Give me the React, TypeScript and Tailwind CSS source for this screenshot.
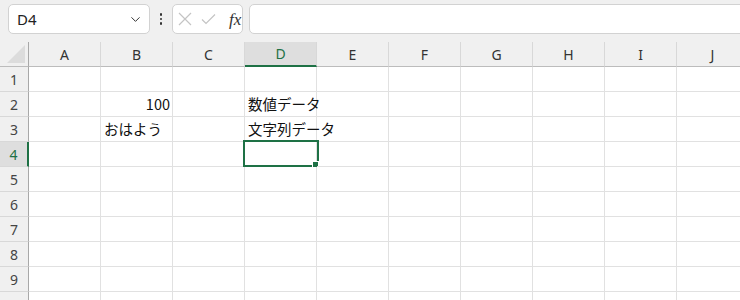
import { ChevronDown } from "lucide-react"

const cols = ["A", "B", "C", "D", "E", "F", "G", "H", "I", "J"]
const rows = [1, 2, 3, 4, 5, 6, 7, 8, 9, 10]

const data: Record<string, { text: string; align?: "right" }> = {
  B2: { text: "100", align: "right" },
  D2: { text: "数値データ" },
  B3: { text: "おはよう" },
  D3: { text: "文字列データ" },
}

const cellFont = { fontFamily: '"Noto Sans CJK JP", "Noto Sans", sans-serif' }

export default function App() {
  return (
    <div className="w-[740px] h-[300px] overflow-hidden bg-white" style={{ fontFamily: '"Noto Sans", "Noto Sans CJK JP", sans-serif' }}>
      {/* formula bar */}
      <div className="h-[42px] bg-[#f0f0f0] flex items-start pt-[4px] pl-[8px]">
        <div className="w-[142px] h-[30px] shrink-0 rounded-[5px] border border-[#d2d2d2] bg-white flex items-center pl-[8px] pr-[6px]">
          <span className="text-[15px] text-[#222] flex-1">D4</span>
          <ChevronDown size={15} strokeWidth={1.6} className="text-[#333]" />
        </div>
        <div className="w-[22px] h-[30px] shrink-0 flex flex-col items-center justify-center gap-[2px]">
          <span className="w-[2.5px] h-[2.5px] bg-[#333] rounded-full" />
          <span className="w-[2.5px] h-[2.5px] bg-[#333] rounded-full" />
          <span className="w-[2.5px] h-[2.5px] bg-[#333] rounded-full" />
        </div>
        <div className="w-[71px] h-[30px] shrink-0 rounded-[5px] border border-[#d2d2d2] bg-white flex items-center pl-[5px]">
          <svg width="14" height="14" viewBox="0 0 14 14" className="mr-[9px]">
            <path d="M1 1 L13 13 M13 1 L1 13" stroke="#c4c4c4" strokeWidth="1.2" fill="none" />
          </svg>
          <svg width="15" height="12" viewBox="0 0 15 12" className="mr-[13px]">
            <path d="M1 6.5 L5 10.5 L14 1.5" stroke="#c4c4c4" strokeWidth="1.2" fill="none" />
          </svg>
          <span className="italic text-[17px] text-[#333] leading-none" style={{ fontFamily: '"Liberation Serif", "DejaVu Serif", serif' }}>
            fx
          </span>
        </div>
        <div className="ml-[6px] w-[520px] h-[30px] shrink-0 rounded-[5px] border border-[#d2d2d2] bg-white" />
      </div>

      {/* sheet */}
      <div className="grid grid-cols-[29px_repeat(10,72px)]">
        {/* header row */}
        <div className="h-[25px] bg-[#f0f0f0] border-r border-r-[#a8a8a8] border-b border-b-[#bcbcbc] flex items-end justify-end pr-[3px] pb-[3px]">
          <svg width="18" height="18" viewBox="0 0 18 18">
            <path d="M18 0 L18 18 L0 18 Z" fill="#dcdcdc" />
          </svg>
        </div>
        {cols.map((c) => {
          const sel = c === "D"
          return (
            <div
              key={c}
              className={
                "h-[25px] border-r border-r-[#d8d8d8] flex items-center justify-center text-[14px] " +
                (sel
                  ? "bg-[#dedede] border-b-2 border-b-[#1e7145] text-[#1e7145]"
                  : "bg-[#f0f0f0] border-b border-b-[#bcbcbc] text-[#333]")
              }
            >
              {c}
            </div>
          )
        })}

        {rows.map((r) => (
          <Row key={r} r={r} />
        ))}
      </div>
    </div>
  )
}

function Row({ r }: { r: number }) {
  const sel = r === 4
  return (
    <>
      <div
        className={
          "h-[25px] border-b border-b-[#d8d8d8] flex items-center justify-center text-[14px] " +
          (sel
            ? "bg-[#dedede] border-r-2 border-r-[#1e7145] text-[#1e7145]"
            : "bg-[#f0f0f0] border-r border-r-[#a8a8a8] text-[#444]")
        }
      >
        {r}
      </div>
      {cols.map((c) => {
        const id = c + r
        const d = data[id]
        return (
          <div
            key={id}
            className={
              "relative h-[25px] border-r border-b border-[#e1e1e1] flex items-center pl-[3px] pr-[2px] whitespace-nowrap text-[14.5px] text-[#111] " +
              (d?.align === "right" ? "justify-end" : "justify-start")
            }
            style={cellFont}
          >
            {d?.text}
            {id === "D4" && (
              <div className="absolute -left-[2px] -top-[2px] w-[76px] h-[27px] border-2 border-[#1e7145]">
                <div className="absolute left-[67px] top-[19px] w-[7px] h-[7px] bg-[#1e7145] border border-white" />
              </div>
            )}
          </div>
        )
      })}
    </>
  )
}
